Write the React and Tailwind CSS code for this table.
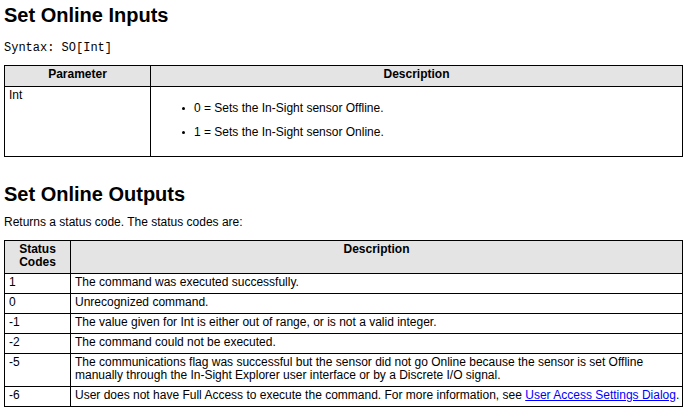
// Set Online — referencia de comando (entradas y salidas)

const STATUS_ROWS = [
  { code: "1", text: "The command was executed successfully." },
  { code: "0", text: "Unrecognized command." },
  { code: "-1", text: "The value given for Int is either out of range, or is not a valid integer." },
  { code: "-2", text: "The command could not be executed." },
  {
    code: "-5",
    text: "The communications flag was successful but the sensor did not go Online because the sensor is set Offline manually through the In-Sight Explorer user interface or by a Discrete I/O signal.",
  },
];

const cell = "border border-black px-[4px] pt-[2px] pb-[4px] align-top";
const head = "border border-black px-[4px] pt-[2px] pb-[4px] align-top bg-[#e4e4e4] font-bold text-center";

export default function App() {
  return (
    <div
      className="bg-white text-black pl-[4px] pr-[4px] text-[12px] leading-[13px] min-h-[412px]"
      style={{ fontFamily: '"Liberation Sans", Arial, sans-serif' }}
    >
      {/* ── Entradas ───────────────────────────────────────────── */}
      <h1 className="pt-[3px] text-[20px] leading-[24px] font-bold">Set Online Inputs</h1>
      <p className="mt-[14px] text-[12px] leading-[14px] font-['Liberation_Mono',monospace]">Syntax: SO[Int]</p>

      <table className="mt-[10px] w-[679px] border-collapse border border-black">
        <thead>
          <tr>
            <th className={`${head} w-[146px] h-[21px]`}>Parameter</th>
            <th className={head}>Description</th>
          </tr>
        </thead>
        <tbody>
          <tr>
            <td className={cell}>Int</td>
            <td className={cell}>
              <ul className="mt-[13px] mb-[13px] flex flex-col gap-[11px] pl-[27px]">
                <li className="flex items-center gap-[9px]">
                  <span className="w-[3px] h-[3px] bg-black rounded-full" />
                  0 = Sets the In-Sight sensor Offline.
                </li>
                <li className="flex items-center gap-[9px]">
                  <span className="w-[3px] h-[3px] bg-black rounded-full" />
                  1 = Sets the In-Sight sensor Online.
                </li>
              </ul>
            </td>
          </tr>
        </tbody>
      </table>

      {/* ── Salidas ────────────────────────────────────────────── */}
      <h2 className="mt-[25px] text-[20px] leading-[24px] font-bold">Set Online Outputs</h2>
      <p className="mt-[9px] leading-[14px]">Returns a status code. The status codes are:</p>

      <table className="mt-[11px] w-[679px] border-collapse border border-black">
        <thead>
          <tr>
            <th className={`${head} w-[66px]`}>
              Status
              <br />
              Codes
            </th>
            <th className={head}>Description</th>
          </tr>
        </thead>
        <tbody>
          {STATUS_ROWS.map((row) => (
            <tr key={row.code}>
              <td className={cell}>{row.code}</td>
              <td className={cell}>{row.text}</td>
            </tr>
          ))}
          <tr>
            <td className={cell}>-6</td>
            <td className={`${cell} whitespace-nowrap !pr-[1px]`}>
              User does not have Full Access to execute the command. For more information, see{" "}
              <a href="#" className="text-[#0000ff] underline">
                User Access Settings Dialog
              </a>
              .
            </td>
          </tr>
        </tbody>
      </table>
    </div>
  );
}
